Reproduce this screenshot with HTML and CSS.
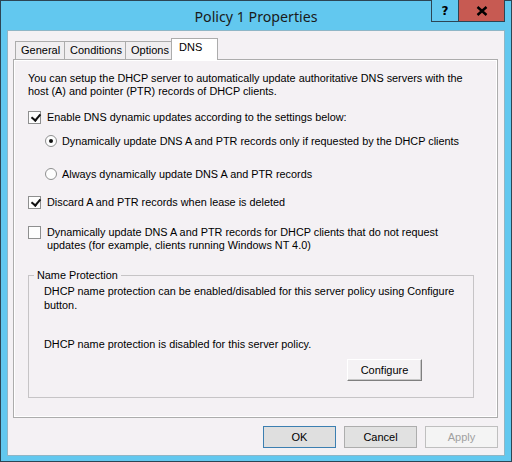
FILE: index.html
```html
<!DOCTYPE html>
<html>
<head>
<meta charset="utf-8">
<link rel="stylesheet" href="styles.css">
</head>
<body>
<div class="window">
  <div class="titlebar">
    <div class="title">Policy 1 Properties</div>
    <div class="caption-buttons">
      <div class="cap-btn help">?</div>
      <div class="cap-btn close">
        <svg width="12" height="10" viewBox="0 0 12 10"><path d="M1.5 1 L10.5 9 M10.5 1 L1.5 9" stroke="#000" stroke-width="2.4" fill="none"/></svg>
      </div>
    </div>
  </div>
  <div class="client">
    <div class="tabs">
      <div class="tab">General</div>
      <div class="tab">Conditions</div>
      <div class="tab">Options</div>
      <div class="tab active">DNS</div>
    </div>
    <div class="panel">
      <p class="intro">You can setup the DHCP server to automatically update authoritative DNS servers with the host (A) and pointer (PTR) records of DHCP clients.</p>
      <div class="row cb1"><span class="check on"></span><span>Enable DNS dynamic updates according to the settings below:</span></div>
      <div class="row radio-row r1"><span class="radio on"></span><span>Dynamically update DNS A and PTR records only if requested by the DHCP clients</span></div>
      <div class="row radio-row r2"><span class="radio"></span><span>Always dynamically update DNS A and PTR records</span></div>
      <div class="row cb2"><span class="check on"></span><span>Discard A and PTR records when lease is deleted</span></div>
      <div class="row cb3"><span class="check"></span><span>Dynamically update DNS A and PTR records for DHCP clients that do not request updates (for example, clients running Windows NT 4.0)</span></div>
      <fieldset class="group">
        <legend>Name Protection</legend>
        <div class="group-body">
          <p class="g1">DHCP name protection can be enabled/disabled for this server policy using Configure button.</p>
          <p class="g2">DHCP name protection is disabled for this server policy.</p>
          <div class="configure-wrap"><button class="btn configure">Configure</button></div>
        </div>
      </fieldset>
    </div>
    <div class="actions">
      <button class="btn default">OK</button>
      <button class="btn">Cancel</button>
      <button class="btn disabled">Apply</button>
    </div>
  </div>
</div>
</body>
</html>
```
FILE: styles.css
```css
* { box-sizing: border-box; }
html, body { margin: 0; padding: 0; }
body {
  width: 512px;
  height: 462px;
  overflow: hidden;
  font-family: "Liberation Sans", Arial, sans-serif;
  font-size: 10.85px;
  color: #000;
  background: #fff;
}
.window {
  width: 512px;
  height: 462px;
  background: #62c8ef;
  border: 1px solid #2c4554;
  display: flex;
  flex-direction: column;
  padding: 0 6px 6px 6px;
}
.titlebar {
  position: relative;
  height: 29px;
  flex: none;
  display: flex;
  align-items: center;
  justify-content: center;
}
.title {
  font-family: "Noto Sans", "Open Sans", sans-serif;
  font-size: 14.2px;
  color: #1a1a1a;
  margin-top: 1px;
}
.caption-buttons {
  position: absolute;
  top: -1px;
  right: 0px;
  display: flex;
  height: 22px;
  border: 1px solid #2c4554;
  border-top: none;
}
.cap-btn {
  height: 21px;
  display: flex;
  align-items: center;
  justify-content: center;
  font-family: "DejaVu Sans", sans-serif;
  font-weight: bold;
  font-size: 12px;
}
.help {
  width: 27px;
  border-right: 1px solid #2c4554;
  background: #62c8ef;
}
.close {
  width: 45px;
  background: #c75a52;
}
.client {
  flex: 1;
  background: #f4f1f4;
  border: 1px solid #8fb6c6;
  padding: 7px 6px 7px 5px;
  display: flex;
  flex-direction: column;
}
.tabs {
  display: flex;
  align-items: flex-end;
  height: 21px;
  margin-left: 2px;
  position: relative;
  z-index: 1;
  font-size: 11px;
}
.tab {
  height: 18px;
  border: 1px solid #acacac;
  border-bottom: none;
  background: #f0eef0;
  padding: 2px 0 0 5px;
  line-height: 13px;
  margin-right: -1px;
}
.tab:nth-child(1) { width: 50px; }
.tab:nth-child(2) { width: 62px; }
.tab:nth-child(3) { width: 47px; }
.tab.active {
  width: 47px;
  height: 22px;
  background: #fff;
  padding: 2px 0 0 7px;
  margin-bottom: -1px;
  z-index: 2;
}
.panel {
  height: 359px;
  border: 1px solid #acacac;
  box-shadow: inset 0 0 0 1px #fff;
  background: #f4f1f4;
  padding: 12px 14px 0 14px;
  display: flex;
  flex-direction: column;
  align-items: flex-start;
}
p { margin: 0; }
.intro { line-height: 13px; width: 440px; }
.row {
  display: flex;
  align-items: flex-start;
  line-height: 13px;
}
.check {
  flex: none;
  width: 13px;
  height: 13px;
  border: 1px solid #8e8f8f;
  background: #fdfdfd;
  margin-right: 6px;
  position: relative;
}
.check.on::after {
  content: "";
  position: absolute;
  top: 0px;
  left: 3.5px;
  width: 4px;
  height: 7px;
  border: solid #111;
  border-width: 0 2px 2px 0;
  transform: rotate(40deg);
}
.cb1 { margin-top: 13px; }
.radio-row { margin-left: 17px; }
.radio {
  flex: none;
  width: 12px;
  height: 12px;
  border-radius: 50%;
  border: 1px solid #8e8f8f;
  background: #fdfdfd;
  margin-right: 5px;
  position: relative;
}
.radio.on::after {
  content: "";
  position: absolute;
  left: 3px;
  top: 3px;
  width: 4px;
  height: 4px;
  border-radius: 50%;
  background: #111;
}
.r1 { margin-top: 11px; }
.r2 { margin-top: 20px; }
.cb2 { margin-top: 15px; }
.cb3 { margin-top: 17px; width: 415px; }
.group {
  margin: 17px 0 0 0;
  width: 446px;
  border: 1px solid #c6c4c6;
  padding: 0 0 16px 5px;
  min-width: 0;
}
.group legend {
  padding: 0 3px;
  line-height: 13px;
}
.group-body {
  padding-left: 10px;
  display: flex;
  flex-direction: column;
}
.g1 { line-height: 14px; margin-top: 2px; width: 422px; }
.g2 { line-height: 13px; margin-top: 26px; }
.configure-wrap {
  display: flex;
  justify-content: flex-end;
  padding-right: 51px;
  margin-top: 8px;
}
.btn {
  font-family: "Liberation Sans", Arial, sans-serif;
  font-size: 11px;
  color: #000;
  height: 22px;
  width: 73px;
  padding: 0;
  border: 1px solid #adadad;
  background: #e1e1e1;
  line-height: 20px;
}
.btn.configure {
  width: 75px;
  background: #f4f2f4;
  border-color: #fff #7f7f7f #7f7f7f #fff;
  box-shadow: inset -1px -1px 0 #c8c8c8;
}
.btn.default {
  border-color: #3c7fb1;
  background: #dfdfdf;
}
.btn.disabled {
  border-color: #bfbfbf;
  background: #f4f4f4;
  color: #a0a0a0;
}
.actions {
  display: flex;
  justify-content: flex-end;
  gap: 8px;
  margin-top: 8px;
}
```
